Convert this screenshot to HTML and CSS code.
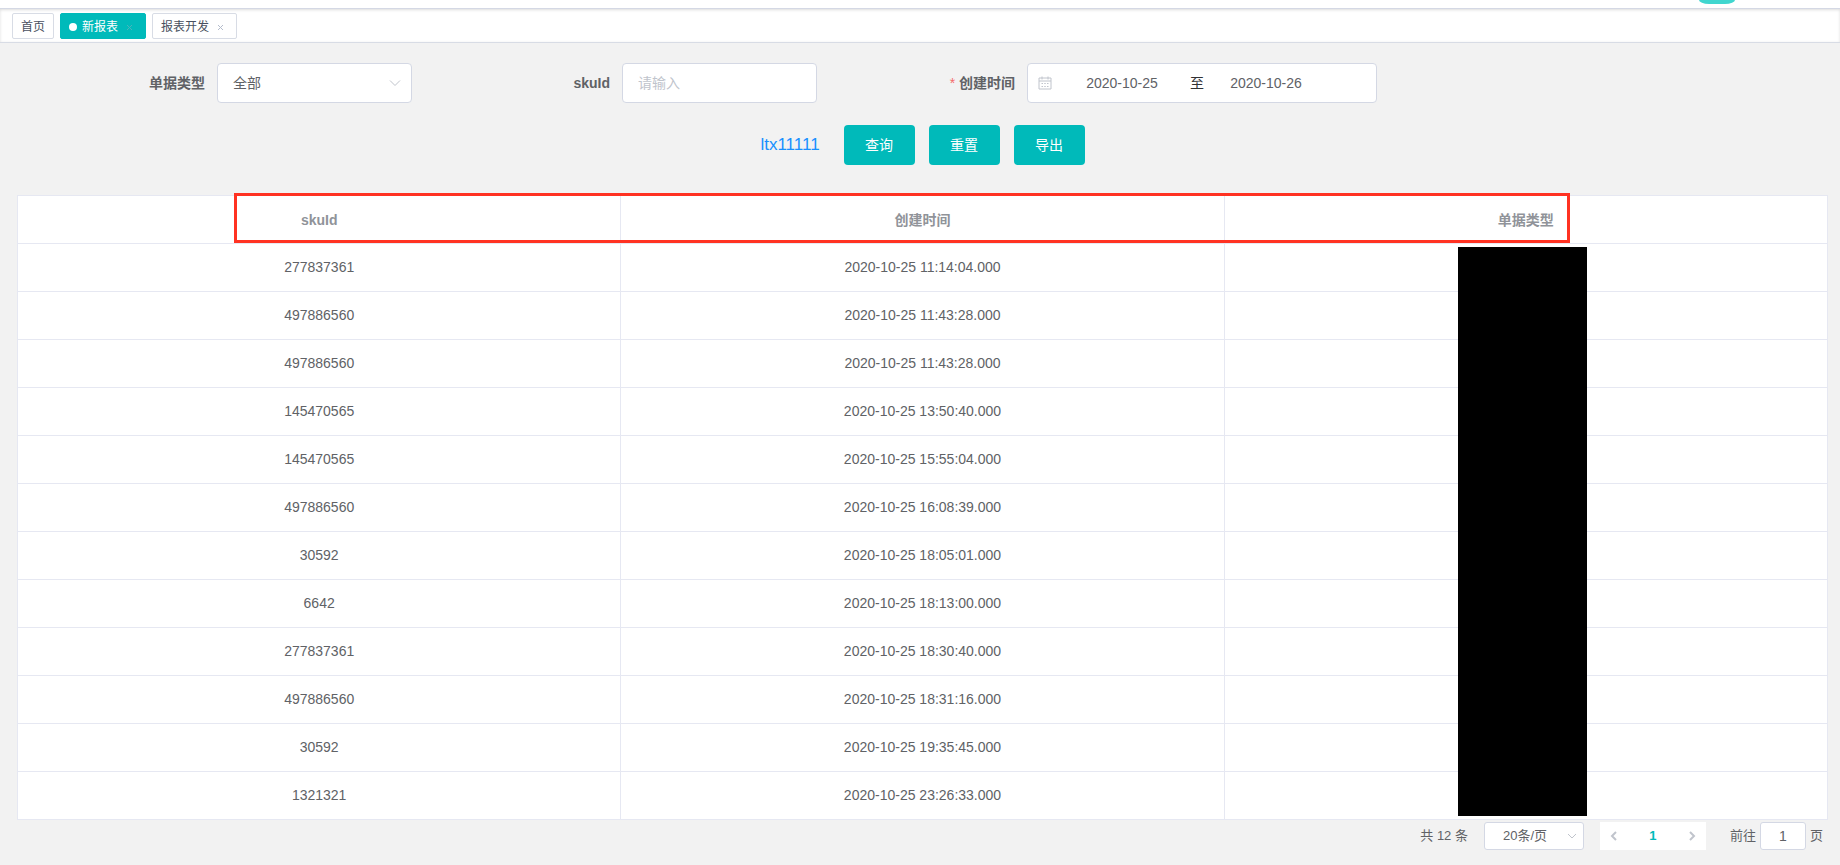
FILE: index.html
```html
<!DOCTYPE html>
<html lang="zh-CN">
<head>
<meta charset="utf-8">
<title>新报表</title>
<link rel="stylesheet" href="styles.css">
</head>
<body>
<header class="navbar"><span class="navbar-avatar"></span></header>
<nav class="tags">
  <a class="tag" href="#home">首页</a>
  <a class="tag tag-active" href="#report"><span class="tag-dot"></span>新报表<svg class="tag-close" viewBox="0 0 16 16"><path d="M6 6l5 5M11 6l-5 5"/></svg></a>
  <a class="tag" href="#dev">报表开发<svg class="tag-close" viewBox="0 0 16 16"><path d="M6 6l5 5M11 6l-5 5"/></svg></a>
</nav>
<main class="main">
  <form class="filters">
    <div class="fields">
      <div class="field">
        <label class="label" for="type">单据类型</label>
        <div class="select-box">
          <select class="control" id="type"><option>全部</option></select>
          <svg class="select-arrow" viewBox="0 0 12 12"><path d="M1 3.500l5 5 5-5"/></svg>
        </div>
      </div>
      <div class="field">
        <label class="label" for="sku">skuId</label>
        <input class="control" id="sku" type="text" placeholder="请输入">
      </div>
      <div class="field">
        <label class="label" for="from"><span class="required">*</span> 创建时间</label>
        <div class="range">
          <svg class="range-icon" viewBox="0 0 14 14"><path d="M1 2h12v11H1zM1 5h12M4 .500v3M10 .500v3M3.500 7.500h1.500M6.250 7.500h1.500M9 7.500h1.500M3.500 10.500h1.500M6.250 10.500h1.500M9 10.500h1.500"/></svg>
          <input class="range-input" id="from" type="text" value="2020-10-25">
          <span class="range-sep">至</span>
          <input class="range-input" type="text" value="2020-10-26" aria-label="结束时间">
        </div>
      </div>
    </div>
    <div class="actions">
      <a class="link" href="#ltx">ltx11111</a>
      <button class="btn" type="button">查询</button>
      <button class="btn" type="button">重置</button>
      <button class="btn" type="button">导出</button>
    </div>
  </form>
  <section class="table-wrap">
    <table class="table">
      <thead><tr><th>skuId</th><th>创建时间</th><th>单据类型</th></tr></thead>
      <tbody>
        <tr><td>277837361</td><td>2020-10-25 11:14:04.000</td><td></td></tr>
        <tr><td>497886560</td><td>2020-10-25 11:43:28.000</td><td></td></tr>
        <tr><td>497886560</td><td>2020-10-25 11:43:28.000</td><td></td></tr>
        <tr><td>145470565</td><td>2020-10-25 13:50:40.000</td><td></td></tr>
        <tr><td>145470565</td><td>2020-10-25 15:55:04.000</td><td></td></tr>
        <tr><td>497886560</td><td>2020-10-25 16:08:39.000</td><td></td></tr>
        <tr><td>30592</td><td>2020-10-25 18:05:01.000</td><td></td></tr>
        <tr><td>6642</td><td>2020-10-25 18:13:00.000</td><td></td></tr>
        <tr><td>277837361</td><td>2020-10-25 18:30:40.000</td><td></td></tr>
        <tr><td>497886560</td><td>2020-10-25 18:31:16.000</td><td></td></tr>
        <tr><td>30592</td><td>2020-10-25 19:35:45.000</td><td></td></tr>
        <tr><td>1321321</td><td>2020-10-25 23:26:33.000</td><td></td></tr>
      </tbody>
    </table>
    <div class="highlight"></div>
    <div class="mask"></div>
  </section>
  <footer class="pagination">
    <span class="total">共 12 条</span>
    <div class="select-box size-box">
      <select class="size" aria-label="每页条数"><option>20条/页</option></select>
      <svg class="size-arrow" viewBox="0 0 12 12"><path d="M2 4l4 4 4-4"/></svg>
    </div>
    <div class="pager">
      <button class="page-btn" type="button" aria-label="上一页"><svg class="page-icon" viewBox="0 0 12 12"><path d="M8 2L4 6l4 4"/></svg></button>
      <button class="page-btn page-current" type="button">1</button>
      <button class="page-btn" type="button" aria-label="下一页"><svg class="page-icon" viewBox="0 0 12 12"><path d="M4 2l4 4-4 4"/></svg></button>
    </div>
    <label class="jump">前往<input class="jump-input" type="text" value="1">页</label>
  </footer>
</main>
</body>
</html>
```
FILE: styles.css
```css
* { box-sizing: border-box; }
body {
  margin: 0;
  background: #f2f2f2;
  color: #606266;
  font: 14px/20px "Liberation Sans", "Noto Sans CJK SC", sans-serif;
}
input, select, button { font: inherit; color: inherit; margin: 0; }
a { text-decoration: none; }
svg { fill: none; stroke: #c0c4cc; }

.navbar {
  display: flex;
  justify-content: flex-end;
  height: 9px;
  padding-right: 105px;
  background: #fff;
  border-bottom: 1px solid #d4d8e4;
}
.navbar-avatar { width: 36px; height: 4px; background: #40d6cf; border-radius: 0 0 10px 10px / 0 0 4px 4px; }

.tags {
  display: flex;
  gap: 6px;
  height: 34px;
  padding: 4px 12px;
  background: #fff;
  border-bottom: 1px solid #d8dce5;
  box-shadow: inset 0 1px 3px rgba(0, 0, 0, .14);
}
.tag {
  display: flex;
  align-items: center;
  height: 26px;
  padding: 1px 8px 0;
  border: 1px solid #d8dce5;
  border-radius: 2px;
  background: #fff;
  color: #495060;
  font-size: 12px;
}
.tag-active { background: #00baba; border-color: #00baba; color: #fff; }
.tag-dot { width: 8px; height: 8px; margin-right: 5px; border-radius: 50%; background: #fff; }
.tag-close { width: 16px; height: 16px; margin-left: 3px; stroke: #b4bccc; }
.tag-active .tag-close { stroke: #4bb4bb; }

.main { padding: 20px 12px 0 17px; }
.fields { display: flex; gap: 10px; }
.field { display: flex; }
.label {
  width: 200px;
  padding-right: 12px;
  text-align: right;
  line-height: 40px;
  font-weight: 600;
}
.required { color: #f56c6c; font-weight: 400; }
.control {
  width: 195px;
  height: 40px;
  padding: 0 15px;
  border: 1px solid #d4d8e4;
  border-radius: 4px;
  background: #fff;
  appearance: none;
}
.control::placeholder { color: #c0c4cc; }
.select-box { position: relative; }
.select-arrow { position: absolute; right: 11px; top: 14px; width: 12px; height: 12px; }
.range {
  display: flex;
  align-items: center;
  width: 350px;
  height: 40px;
  padding: 0 10px;
  border: 1px solid #d4d8e4;
  border-radius: 4px;
  background: #fff;
}
.range-icon { width: 14px; height: 14px; margin-right: 10px; }
.range-input { width: 120px; height: 38px; padding: 0; border: 0; background: none; text-align: center; }
.range-sep { width: 24px; padding-left: 8px; color: #303133; }

.actions { display: flex; justify-content: center; align-items: center; gap: 14px; padding: 22px 0 30px; }
.link { margin-right: 10px; color: #1890ff; font-size: 17px; }
.btn { min-width: 71px; height: 40px; padding: 0 20px; border: 0; border-radius: 4px; background: #00baba; color: #fff; }

.table-wrap { position: relative; }
.table {
  width: 100%;
  table-layout: fixed;
  border-collapse: collapse;
  background: #fff;
  text-align: center;
}
.table th, .table td { height: 48px; padding: 0; border: 1px solid #e6e8f2; }
.table td { padding-bottom: 2px; }
.table th { color: #909399; font-weight: 600; }
.highlight { position: absolute; left: 12%; top: -2px; width: 73.75%; height: 50px; border: 3px solid #ff3222; }
.mask { position: absolute; right: 241px; top: 52px; bottom: 4px; width: 129px; background: #000; }

.pagination {
  display: flex;
  justify-content: flex-end;
  align-items: center;
  gap: 16px;
  padding: 2px 5px 0 0;
  font-size: 13px;
}
.size { display: block; width: 100px; height: 28px; padding: 0 18px; border: 1px solid #d4d8e4; border-radius: 3px; background: #fff; appearance: none; }
.size-arrow { position: absolute; right: 6px; top: 8px; width: 12px; height: 12px; }
.pager { display: flex; justify-content: space-between; width: 106px; background: #fff; }
.page-btn { display: flex; align-items: center; justify-content: center; width: 28px; height: 28px; padding: 0; border: 0; background: none; }
.page-current { color: #00baba; font-weight: 700; }
.page-icon { width: 12px; height: 12px; stroke-width: 2; }
.jump { display: flex; align-items: center; gap: 4px; margin-left: 8px; }
.jump-input { width: 46px; height: 28px; padding: 0; border: 1px solid #d4d8e4; border-radius: 3px; background: #fff; text-align: center; font-size: 14px; }
```
